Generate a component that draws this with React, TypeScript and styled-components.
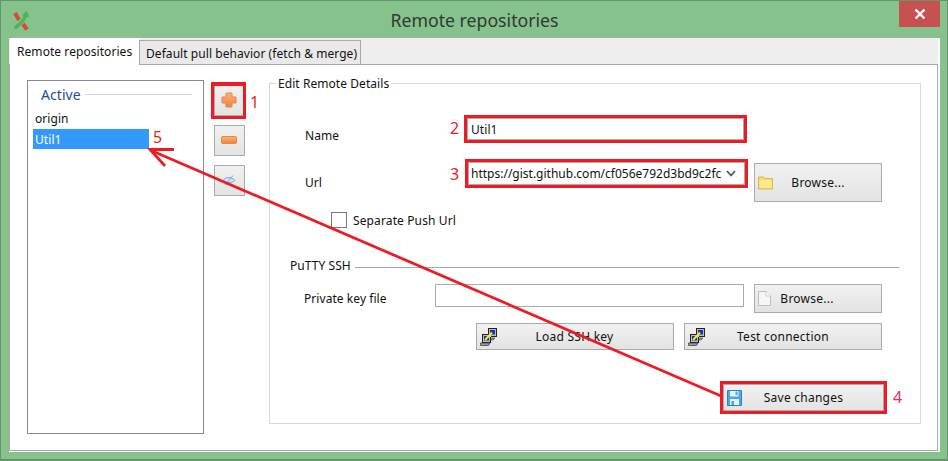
import React from "react";
import styled, { createGlobalStyle, css } from "styled-components";

const Global = createGlobalStyle`
  html, body { margin: 0; padding: 0; background: #86c28b; overflow: hidden; }
  * { box-sizing: border-box; }
`;

const RED = "#ed1c24";
const FONT = `"Noto Sans", "Open Sans", sans-serif`;

const Win = styled.div`
  position: relative;
  width: 948px;
  height: 461px;
  display: flex;
  flex-direction: column;
  border: 1px solid #66946c;
  border-bottom-width: 2px;
  background: #86c28b;
  padding: 0 7px 7px 8px;
  font: 12px/16px ${FONT};
  letter-spacing: 0.06px;
  color: #111;
`;

const TitleBar = styled.header`
  height: 36px;
  flex: none;
  display: grid;
  grid-template-columns: 1fr auto 1fr;
`;
const LogoBox = styled.div`
  padding: 9px 0 0 3px;
  line-height: 0;
`;
const Title = styled.h1`
  margin: 0;
  padding-top: 7px;
  font: 400 17.7px/24px ${FONT};
  letter-spacing: 0;
  color: #2f3a33;
`;
const CloseWrap = styled.div`
  display: flex;
  justify-content: flex-end;
`;
const Close = styled.div`
  width: 41px;
  height: 26px;
  background: #c75050;
  display: flex;
  align-items: center;
  justify-content: center;
  line-height: 0;
`;

const Client = styled.div`
  flex: 1;
  display: flex;
  flex-direction: column;
  background: #fff;
  border-top: 1px solid #9db5a2;
  padding: 0 2px 1px 0;
`;
const TabStrip = styled.div`
  height: 26px;
  flex: none;
  background: #eee;
  display: flex;
  align-items: flex-end;
  padding-left: 1px;
`;
const Tab = styled.div<{ $active?: boolean }>`
  white-space: nowrap;
  position: relative;
  ${(p) =>
    p.$active
      ? css`
          width: 129px;
          height: 27px;
          margin-bottom: -1px;
          background: #fff;
          padding: 6px 0 0 7px;
          z-index: 1;
        `
      : css`
          width: 222px;
          height: 24px;
          background: #e9e9e9;
          border: 1px solid #a9a9a9;
          border-bottom: none;
          padding: 5px 0 0 6px;
        `}
`;
const Pane = styled.div`
  flex: 1;
  display: flex;
  align-items: flex-start;
  border: 1px solid #a9a9a9;
  padding: 15px 0 0 17px;
`;

const ListBox = styled.div`
  width: 177px;
  height: 354px;
  flex: none;
  border: 1px solid #88888f;
  padding: 5px 5px 0;
`;
const ListHeader = styled.div`
  display: flex;
  align-items: center;
  gap: 4px;
  padding: 0 6px 2px 8px;
  height: 20px;
  font-size: 14px;
  color: #2848a8;
`;
const HeaderRule = styled.span`
  flex: 1;
  height: 1px;
  margin-top: -2px;
  background: #cdd6ee;
`;
const ListItem = styled.div<{ $selected?: boolean }>`
  width: 116px;
  height: 20px;
  padding-left: 2px;
  ${(p) =>
    p.$selected
      ? css`
          background: #3399ff;
          color: #fff;
          line-height: 22px;
        `
      : css`
          margin-top: 3px;
          line-height: 20px;
        `}
`;

const ToolColumn = styled.div`
  flex: none;
  display: flex;
  flex-direction: column;
  gap: 9px;
  margin: 5px 24px 0 10px;
`;
const ToolButton = styled.div<{ $marked?: boolean }>`
  position: relative;
  width: 31px;
  height: 31px;
  border: 1px solid #ababab;
  padding: 0 1px 1px 0;
  background: linear-gradient(#f1f1f1, #e3e3e3);
  display: flex;
  align-items: center;
  justify-content: center;
  line-height: 0;
  ${(p) =>
    p.$marked &&
    css`
      &::after {
        content: "";
        position: absolute;
        inset: -4px -2px -4px -4px;
        border: 3px solid ${RED};
        border-top-width: 4px;
      }
    `}
`;

const Group = styled.section`
  position: relative;
  flex: none;
  width: 652px;
  height: 341px;
  margin-top: 3px;
  border: 1px solid #d9d9d9;
`;
const Legend = styled.div`
  position: absolute;
  top: -8px;
  left: 6px;
  padding: 0 2px;
  background: #fff;
`;
const Row = styled.div<{ $top: number; $height: number; $indent?: number }>`
  display: flex;
  align-items: flex-start;
  margin-top: ${(p) => p.$top}px;
  height: ${(p) => p.$height}px;
  padding-left: ${(p) => p.$indent ?? 0}px;
`;
const FieldLabel = styled.label<{ $width: number; $indent: number; $drop: number }>`
  flex: none;
  width: ${(p) => p.$width}px;
  padding: ${(p) => p.$drop}px 0 0 ${(p) => p.$indent}px;
`;
const TextBox = styled.div<{ $width: number; $height: number; $marked?: boolean }>`
  flex: none;
  width: ${(p) => p.$width}px;
  height: ${(p) => p.$height}px;
  border: 1px solid #ababab;
  background: #fff;
  padding: 3px 0 0 3px;
  ${(p) => p.$marked && css`outline: 3px solid ${RED};`}
`;
const Combo = styled.div`
  flex: none;
  width: 277px;
  height: 23px;
  margin-left: 1px;
  outline: 3px solid ${RED};
  background: #fff;
  border: 1px solid #ababab;
  display: flex;
  align-items: center;
  padding: 0 8px 0 2px;
  letter-spacing: 0;
`;
const ComboText = styled.span`
  flex: 1;
  overflow: hidden;
  white-space: nowrap;
`;
const Button = styled.div<{
  $width: number;
  $height: number;
  $gap?: number;
  $drop?: number;
  $shift?: number;
  $marked?: boolean;
}>`
  flex: none;
  width: ${(p) => p.$width}px;
  height: ${(p) => p.$height}px;
  margin-left: ${(p) => p.$gap ?? 0}px;
  margin-top: ${(p) => p.$drop ?? 0}px;
  padding: 0 ${(p) => (p.$shift ?? 0) + 3}px 0 3px;
  border: 1px solid #ababab;
  background: linear-gradient(#f1f1f1, #e3e3e3);
  display: grid;
  grid-template-columns: 1fr auto 1fr;
  align-items: center;
  line-height: 0;
  ${(p) => p.$marked && css`outline: 3px solid ${RED};`}
`;
const ButtonIcon = styled.span`
  justify-self: start;
  line-height: 0;
`;
const ButtonText = styled.span`
  line-height: 16px;
  letter-spacing: 0.24px;
`;
const CheckMark = styled.div`
  flex: none;
  width: 16px;
  height: 16px;
  border: 1px solid #7a7a7a;
  background: #fff;
  margin-right: 6px;
`;
const CheckLabel = styled.span`
  line-height: 16px;
  padding-top: 1px;
  letter-spacing: 0.12px;
`;
const SectionText = styled.span`
  flex: none;
  padding-top: 1px;
`;
const SectionRule = styled.span`
  flex: 1;
  height: 1px;
  background: #a9a9a9;
  margin: 10px 21px 0 4px;
`;
const Overlay = styled.svg`
  position: absolute;
  left: -1px;
  top: -1px;
  pointer-events: none;
  z-index: 3;
`;
const Num = styled.span<{ $x: number; $y: number; $pink?: boolean }>`
  position: absolute;
  left: ${(p) => p.$x - 1}px;
  top: ${(p) => p.$y - 1}px;
  font: 400 16px/20px ${FONT};
  color: ${(p) => (p.$pink ? "#ee2a5a" : RED)};
  z-index: 4;
`;

const Logo = () => (
  <svg width="20" height="22" viewBox="0 0 20 22">
    <path d="M3 3 L7 10" stroke="#d9483b" strokeWidth="4" fill="none" />
    <path d="M11 14 L15 19.5" stroke="#d9483b" strokeWidth="4" fill="none" />
    <path d="M3 18.5 C6 13.5 12 13 13.5 5" stroke="#4cb45a" strokeWidth="3.4" fill="none" />
    <path d="M10 6 L14.5 0.5 L17.5 7 Z" fill="#4cb45a" />
  </svg>
);
const CloseIcon = () => (
  <svg width="12" height="12" viewBox="0 0 12 12">
    <path d="M1.5 1.5 L10.5 10.5 M10.5 1.5 L1.5 10.5" stroke="#fff" strokeWidth="2.4" />
  </svg>
);
const Plus = () => (
  <svg width="16" height="16" viewBox="0 0 16 16">
    <defs>
      <linearGradient id="org" x1="0" y1="0" x2="0" y2="1">
        <stop offset="0" stopColor="#ffb27a" />
        <stop offset="1" stopColor="#f08238" />
      </linearGradient>
    </defs>
    <path
      d="M5 1 H11 V5 H15 V11 H11 V15 H5 V11 H1 V5 H5 Z"
      fill="url(#org)"
      stroke="#e08a4c"
      strokeLinejoin="round"
    />
  </svg>
);
const Minus = () => (
  <svg width="16" height="8" viewBox="0 0 16 8">
    <rect x="0.5" y="0.5" width="15" height="7" rx="1" fill="url(#org)" stroke="#e08a4c" />
  </svg>
);
const EyeOff = () => (
  <svg width="14" height="12" viewBox="0 0 14 12">
    <path d="M1 6.5 C4 2.5 9 2.5 13 6.5 C9 9.5 4 9.5 1 6.5 Z" fill="#d3e3fa" stroke="#7aa8ea" />
    <path d="M3 11 L11 1.5" stroke="#7aa8ea" />
  </svg>
);
const Folder = () => (
  <svg width="15" height="14" viewBox="0 0 15 14">
    <path d="M0.5 1 H5.5 L6.5 2.5 H14.5 V13 H0.5 Z" fill="#f8dc6a" stroke="#d9b93f" />
    <rect x="1.5" y="4" width="12" height="8" fill="#fbe88f" />
  </svg>
);
const Doc = () => (
  <svg width="13" height="15" viewBox="0 0 13 15">
    <path d="M0.5 0.5 H8 L12.5 5 V14.5 H0.5 Z" fill="#f6f6f6" stroke="#bdbdbd" />
    <path d="M8 0.5 V5 H12.5" fill="#fff" stroke="#c9c9c9" />
  </svg>
);
const Putty = () => (
  <svg width="17" height="18" viewBox="0 0 17 18">
    <rect x="8.5" y="0.5" width="8" height="8" fill="#bcbcbc" stroke="#222" />
    <rect x="10" y="2" width="5" height="4.5" fill="#1a2fc0" />
    <path d="M8 10 H15 L13 12 H8 Z" fill="#999" stroke="#333" strokeWidth="0.6" />
    <rect x="2.5" y="6.5" width="8" height="8" fill="#bcbcbc" stroke="#222" />
    <rect x="4" y="8" width="5" height="4.5" fill="#1a2fc0" />
    <path d="M0.5 15 H10 L8.5 17.5 H0.5 Z" fill="#9a9a9a" stroke="#333" strokeWidth="0.7" />
    <path d="M5 12 L12 4.5 M8 8 L11 8" stroke="#f4e820" strokeWidth="2" />
  </svg>
);
const Floppy = () => (
  <svg width="15" height="16" viewBox="0 0 15 16">
    <path d="M0.5 0.5 H14.5 V15.5 H0.5 Z" fill="#4da6e6" stroke="#2b86c9" />
    <rect x="3" y="1" width="8.5" height="5.5" fill="#e6f3fb" />
    <rect x="8.5" y="1.5" width="2" height="3.5" fill="#4da6e6" />
    <rect x="3" y="9" width="9" height="6" fill="#e6f3fb" />
    <rect x="4.5" y="11" width="2.5" height="4" fill="#4da6e6" />
  </svg>
);

export default function App() {
  return (
    <>
      <Global />
      <Win>
        <TitleBar>
          <LogoBox>
            <Logo />
          </LogoBox>
          <Title>Remote repositories</Title>
          <CloseWrap>
            <Close>
              <CloseIcon />
            </Close>
          </CloseWrap>
        </TitleBar>
        <Client>
          <TabStrip>
            <Tab $active>Remote repositories</Tab>
            <Tab>Default pull behavior (fetch &amp; merge)</Tab>
          </TabStrip>
          <Pane>
            <ListBox>
              <ListHeader>
                Active
                <HeaderRule />
              </ListHeader>
              <ListItem>origin</ListItem>
              <ListItem $selected>Util1</ListItem>
            </ListBox>
            <ToolColumn>
              <ToolButton $marked>
                <Plus />
              </ToolButton>
              <ToolButton>
                <Minus />
              </ToolButton>
              <ToolButton>
                <EyeOff />
              </ToolButton>
            </ToolColumn>
            <Group>
              <Legend>Edit Remote Details</Legend>
              <Row $top={34} $height={22}>
                <FieldLabel $width={197} $indent={35} $drop={10}>
                  Name
                </FieldLabel>
                <TextBox $width={277} $height={22} $marked>
                  Util1
                </TextBox>
              </Row>
              <Row $top={22} $height={40}>
                <FieldLabel $width={197} $indent={35} $drop={13}>
                  Url
                </FieldLabel>
                <Combo>
                  <ComboText>https://gist.github.com/cf056e792d3bd9c2fc</ComboText>
                  <svg width="10" height="7" viewBox="0 0 10 7">
                    <path d="M1 1 L5 5.5 L9 1" fill="none" stroke="#555" strokeWidth="1.8" />
                  </svg>
                </Combo>
                <Button $width={128} $height={39} $gap={9} $drop={1}>
                  <ButtonIcon>
                    <Folder />
                  </ButtonIcon>
                  <ButtonText>Browse...</ButtonText>
                </Button>
              </Row>
              <Row $top={10} $height={16} $indent={61}>
                <CheckMark />
                <CheckLabel>Separate Push Url</CheckLabel>
              </Row>
              <Row $top={29} $height={16} $indent={20}>
                <SectionText>PuTTY SSH</SectionText>
                <SectionRule />
              </Row>
              <Row $top={11} $height={29}>
                <FieldLabel $width={165} $indent={34} $drop={7}>
                  Private key file
                </FieldLabel>
                <TextBox $width={309} $height={23} />
                <Button $width={128} $height={29} $gap={10} $shift={22}>
                  <ButtonIcon>
                    <Doc />
                  </ButtonIcon>
                  <ButtonText>Browse...</ButtonText>
                </Button>
              </Row>
              <Row $top={10} $height={27} $indent={206}>
                <Button $width={198} $height={27} $shift={1}>
                  <ButtonIcon>
                    <Putty />
                  </ButtonIcon>
                  <ButtonText>Load SSH key</ButtonText>
                </Button>
                <Button $width={198} $height={27} $gap={10}>
                  <ButtonIcon>
                    <Putty />
                  </ButtonIcon>
                  <ButtonText>Test connection</ButtonText>
                </Button>
              </Row>
              <Row $top={34} $height={27} $indent={453}>
                <Button $width={161} $height={27} $marked>
                  <ButtonIcon>
                    <Floppy />
                  </ButtonIcon>
                  <ButtonText>Save changes</ButtonText>
                </Button>
              </Row>
            </Group>
          </Pane>
        </Client>
        <Overlay width="948" height="461" viewBox="0 0 948 461">
          <path d="M721 396 L150 150" stroke={RED} strokeWidth="2.8" fill="none" />
          <path d="M174 149.5 H150 L165 166" stroke={RED} strokeWidth="2.8" fill="none" />
        </Overlay>
        <Num $x={250} $y={92}>1</Num>
        <Num $x={450} $y={118}>2</Num>
        <Num $x={450} $y={164}>3</Num>
        <Num $x={893} $y={387} $pink>4</Num>
        <Num $x={153} $y={127}>5</Num>
      </Win>
    </>
  );
}
